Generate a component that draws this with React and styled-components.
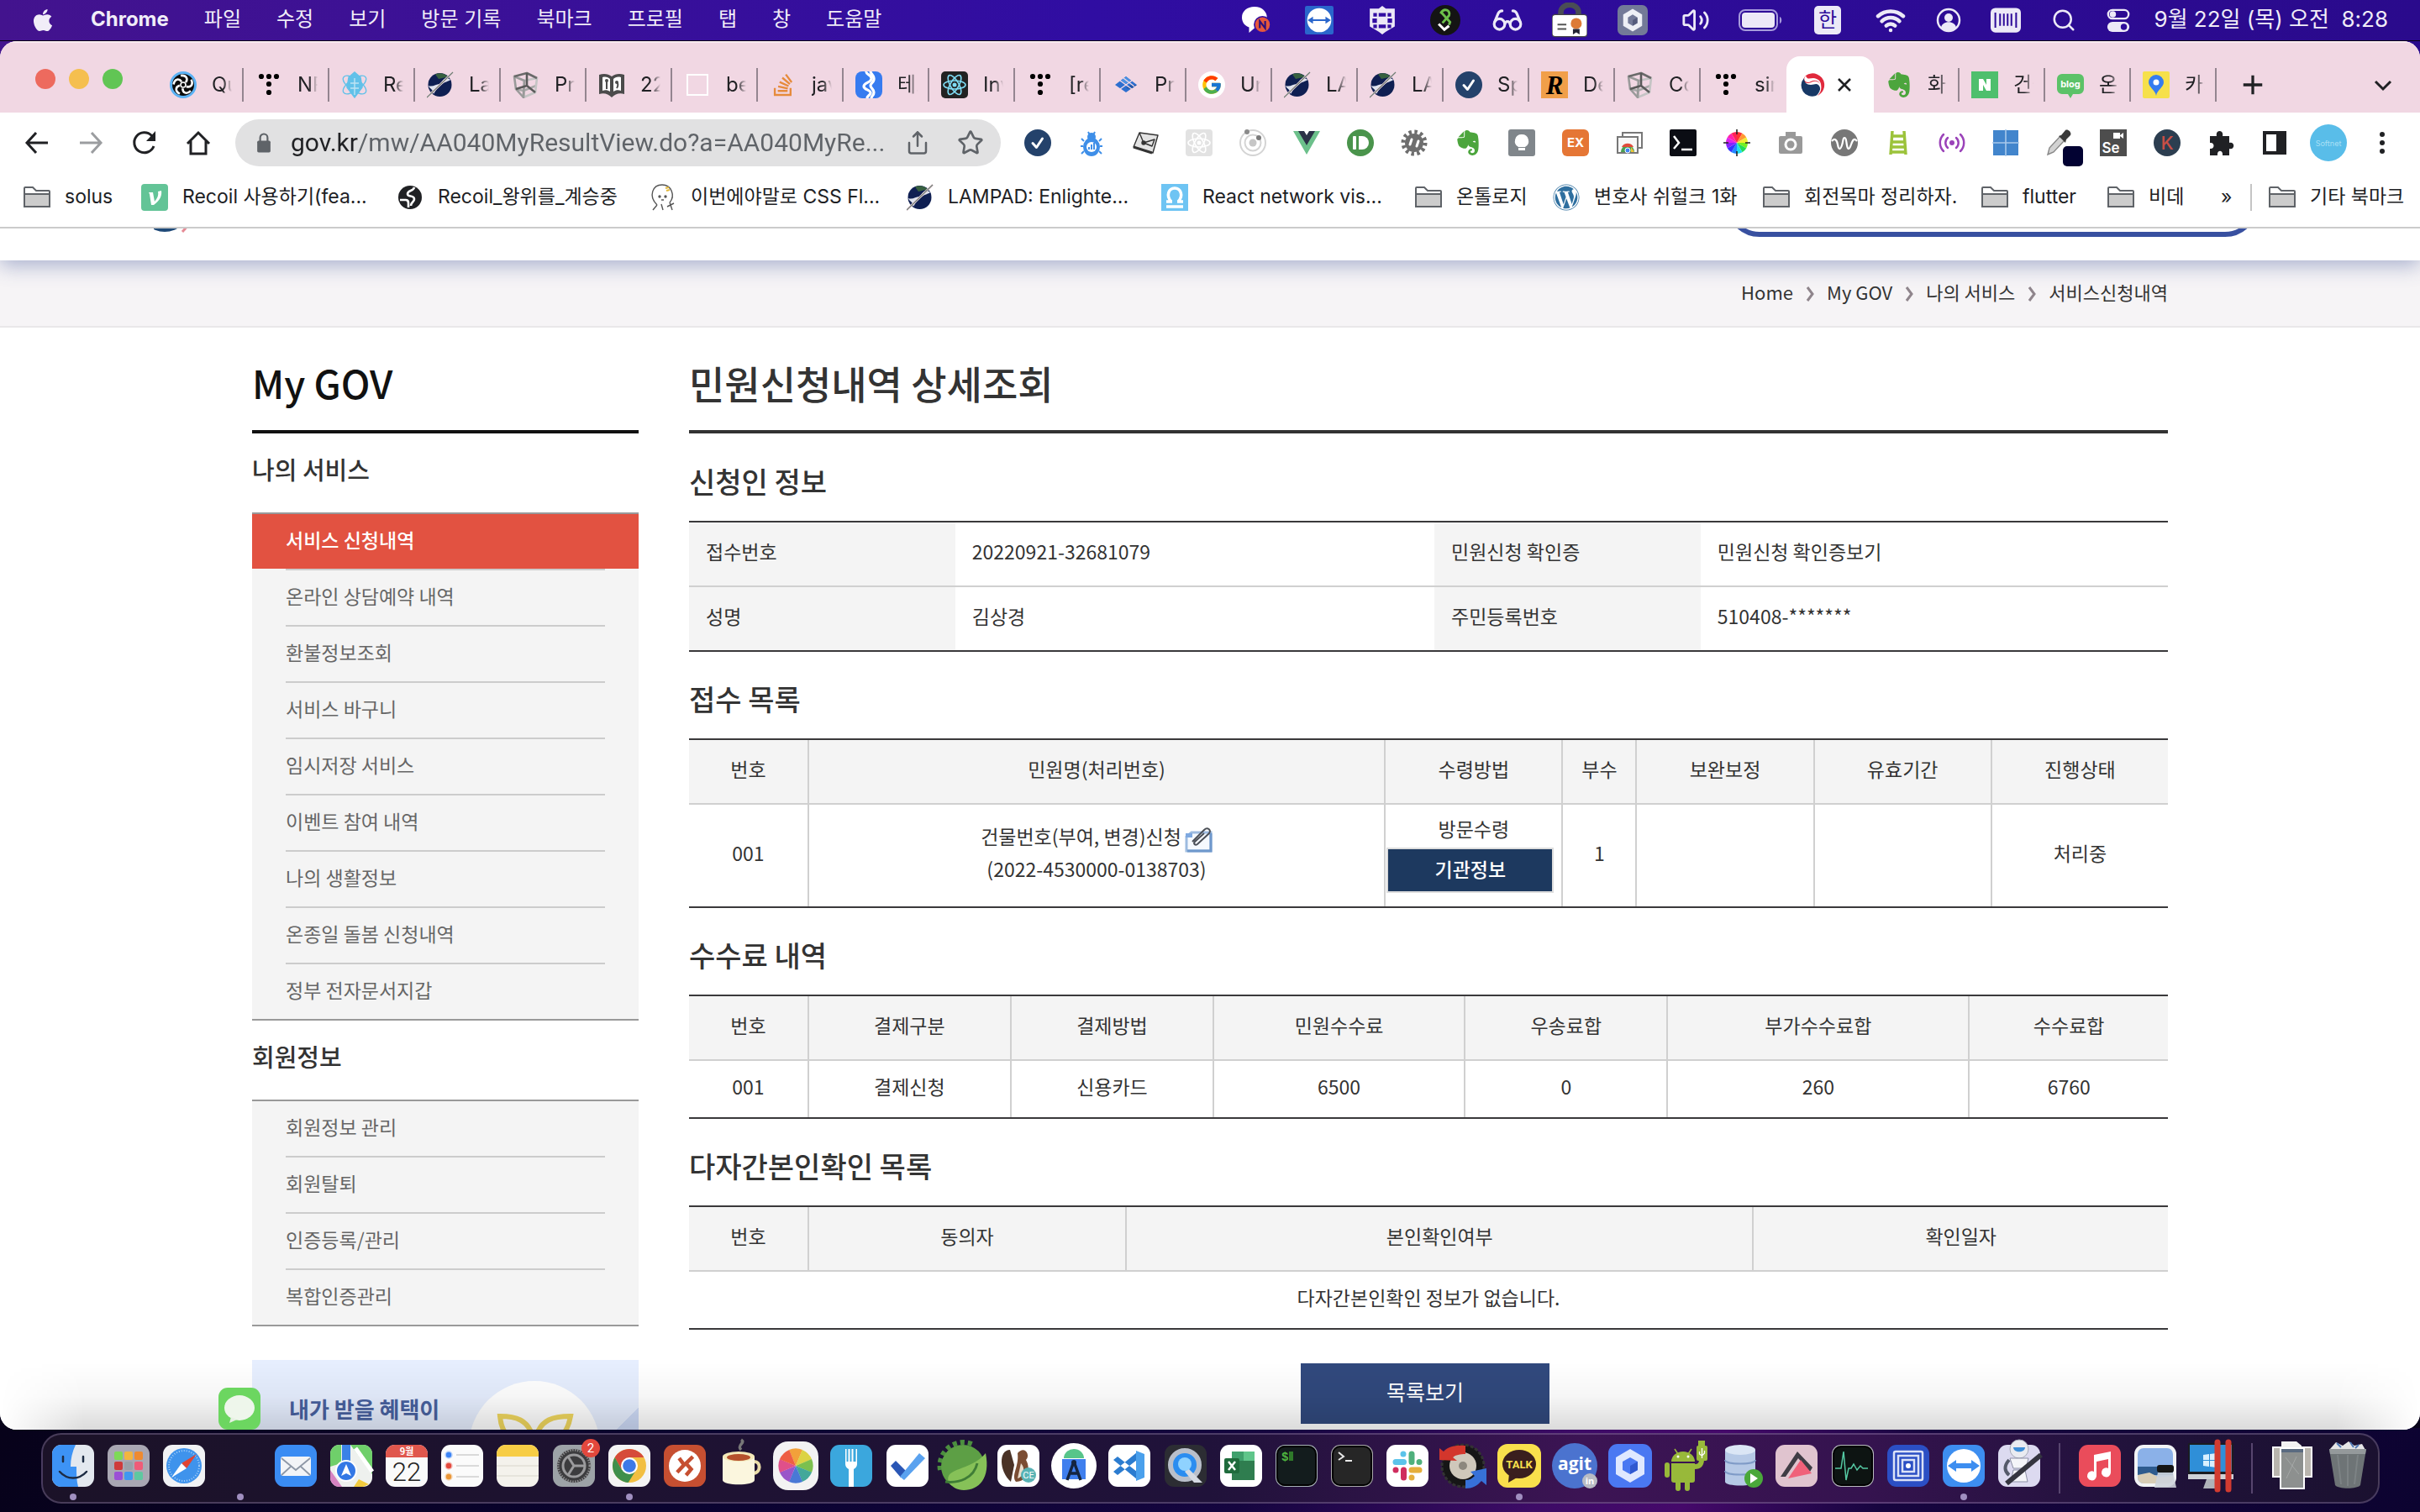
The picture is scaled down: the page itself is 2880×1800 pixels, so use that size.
import React from "react";
import styled, { createGlobalStyle, css } from "styled-components";
import { FaApple, FaEvernote, FaWordpress, FaStackOverflow } from "react-icons/fa";
import { FcGoogle } from "react-icons/fc";
import { Wifi, Search, Share, Star, Glasses, Volume2 } from "lucide-react";

const uiFont = `Inter, "Noto Sans CJK KR", sans-serif`;
const pageFont = `"Noto Sans CJK KR", "Noto Sans", sans-serif`;

const GlobalStyle = createGlobalStyle`
  *, *::before, *::after { box-sizing: border-box; }
  html, body { margin: 0; padding: 0; }
  body { overflow: hidden; background: #08031a; font-family: ${uiFont}; color: #202124; }
  button, input { font: inherit; color: inherit; }
  button { border: 0; padding: 0; background: none; cursor: pointer; }
  a { color: inherit; text-decoration: none; }
  ul, ol { margin: 0; padding: 0; list-style: none; }
  h1, h2, h3, p { margin: 0; }
`;

/* ---------- drawings: small icons on a 32 unit grid ---------- */

const Glyph = ({ children, box = 32 }) => (
  <svg viewBox={`0 0 ${box} ${box}`} width="100%" height="100%" fill="none" aria-hidden="true">
    {children}
  </svg>
);

const lampad = (
  <>
    <circle cx="15.5" cy="16" r="14" fill="#0f1f52" />
    <path d="M10 3.500a14 14 0 0 1 15 3L14 9z" fill="#37603f" />
    <path d="M2 17c5 2 9-2 13-2l-7 12c0-6-5-6-6-10z" fill="#dfe3ee" />
    <path d="M18 12c3-5 8-4 10-2-2 2-7 2-12 7z" fill="#dfe3ee" />
    <path d="M0 31L31 1" stroke="#f1d6e2" strokeWidth="2.600" />
    <path d="M0 31L31 1" stroke="#6d7d72" strokeWidth="1.200" />
  </>
);
const tistory = (
  <g fill="#000">
    {[[7, 6], [16, 6], [25, 6], [16, 15], [16, 25]].map(([x, y]) => (
      <circle key={`${x}-${y}`} cx={x} cy={y} r="3.100" />
    ))}
  </g>
);
const cube = (
  <g strokeWidth="2.600" strokeLinejoin="round">
    <path d="M13 23L28 17M13 23V31M13 23L4 21" stroke="#a9a9a9" />
    <path d="M13 31l14-6 2-17-15 3z" stroke="#c4c4c4" />
    <path d="M13 31L4 21 2 6l12 5z" stroke="#9a9a9a" />
    <path d="M2 6l15-4 12 6" stroke="#6a6a6a" />
    <path d="M17 2v15L4 21M17 17l10 8" stroke="#5a5a5a" />
  </g>
);
const checkDot = (
  <>
    <circle cx="16" cy="16" r="16" fill="#24426b" />
    <path d="M10 16.500l4.500 5L21.500 11" stroke="#fff" strokeWidth="3" strokeLinecap="round" strokeLinejoin="round" />
  </>
);
const folder = (
  <>
    <path d="M1 27V5a1 1 0 0 1 1-1h9l4 4h15a1 1 0 0 1 1 1v18z" fill="#fff" stroke="#5f6368" strokeWidth="2" />
    <path d="M1 12h30v15H1z" fill="#ccc" stroke="#5f6368" strokeWidth="2" />
  </>
);
const evernote = <FaEvernote size={34} color="#4ca53d" />;

const small = {
  lampad, tistory, cube, checkDot, folder,
  swirl: (
    <>
      <circle cx="16" cy="16" r="14.500" fill="#0b0b0b" stroke="#5bb2f4" strokeWidth="3" />
      {[0, 72, 144, 216, 288].map((a) => (
        <path key={a} transform={`rotate(${a} 16 16)`} d="M13 5c7-1 9 4 6 8" stroke="#fff" strokeWidth="2.600" />
      ))}
      <circle cx="16" cy="16" r="3" stroke="#fff" strokeWidth="1.600" />
    </>
  ),
  relay: (
    <g stroke="#62c1e9" strokeWidth="1.400">
      <ellipse cx="16" cy="16" rx="16" ry="7" transform="rotate(35 16 16)" />
      <ellipse cx="16" cy="16" rx="16" ry="7" transform="rotate(-35 16 16)" />
      <path d="M9 7l7-6 7 6 2 12-9 12-9-12z" fill="#62c1e9" />
      <path d="M16 8v20M11 14h10M11 20h10" stroke="#bfe4f4" />
    </g>
  ),
  book: (
    <>
      <path d="M1 4c6-2 11-1 15 2 4-3 9-4 15-2v23c-6-2-11 0-15 4-4-4-9-6-15-4z" fill="#4b4b4b" />
      <path d="M5 7c4-1 7 0 9 2v15c-3-2-6-2-9-1zM27 7c-4-1-7 0-9 2v15c3-2 6-2 9-1z" fill="#fff" />
      <path d="M10 11v10M22 20c2-3 2-5 0-8" stroke="#4b4b4b" strokeWidth="2" />
      <circle cx="10" cy="11" r="2" fill="#4b4b4b" /><circle cx="22" cy="13" r="2" fill="#4b4b4b" />
    </>
  ),
  blank: <rect x="4" y="4" width="24" height="24" stroke="#fff" strokeWidth="2" />,
  wave: (
    <>
      <rect width="32" height="32" rx="8" fill="#367bf0" />
      <path d="M13 0c-1 4 7 4 6 9-1 5-9 4-9 9 0 4 9 4 8 8-1 3-4 3-4 6" stroke="#fff" strokeWidth="3.200" />
      <path d="M18 0c0 3 5 5 4 10-1 4-4 4-4 7s4 4 4 8-3 4-3 7" stroke="#fff" strokeWidth="3.200" />
    </>
  ),
  reactDark: (
    <>
      <rect width="32" height="32" rx="5" fill="#222" />
      <g stroke="#7fdcf5" strokeWidth="1.600">
        <ellipse cx="16" cy="16" rx="13" ry="5" />
        <ellipse cx="16" cy="16" rx="13" ry="5" transform="rotate(60 16 16)" />
        <ellipse cx="16" cy="16" rx="13" ry="5" transform="rotate(120 16 16)" />
      </g>
      <circle cx="16" cy="16" r="2.500" fill="#7fdcf5" />
    </>
  ),
  reactLight: (
    <>
      <rect width="32" height="32" rx="4" fill="#e2e2e2" />
      <g stroke="#fff" strokeWidth="1.600">
        <ellipse cx="16" cy="16" rx="13" ry="5" />
        <ellipse cx="16" cy="16" rx="13" ry="5" transform="rotate(60 16 16)" />
        <ellipse cx="16" cy="16" rx="13" ry="5" transform="rotate(120 16 16)" />
      </g>
      <circle cx="16" cy="16" r="2.500" fill="#fff" />
    </>
  ),
  diamonds: (
    <>
      <path d="M16 6l13 10-13 9L3 16z" fill="#2d6fcf" />
      <path d="M16 6l6 5-6 4-6-4z" fill="#4a90e2" /><path d="M22 16l7 0-7 5-6-1z" fill="#1f56a8" />
      <path d="M9 11l14 10M23 11L9 21M13 8l13 10" stroke="#f1d7e3" strokeWidth="1.400" />
    </>
  ),
  rust: (
    <>
      <rect width="32" height="32" fill="#f19f4a" />
      <text x="16" y="27" textAnchor="middle" fontFamily="Liberation Serif" fontWeight="700" fontStyle="italic" fontSize="31" fill="#000">R</text>
    </>
  ),
  korea: (
    <>
      <path d="M7 5A14 14 0 0 1 29 14c1 7-3 12-8 15 6-6 6-15-1-17-5-1-6 2-10 2-6 0-7-5-3-9z" fill="#e0293c" />
      <path d="M5 8c0 5 3 8 8 8 4 0 6-2 9 0 4 4 2 10-3 13A13 13 0 0 1 5 8z" fill="#173865" />
      <path d="M7 5c-5 6 2 10 6 7 4-2 9-2 11 3 2 6-2 11-4 14 6-5 8-17 0-20-6-3-11 3-13-4z" fill="#fff" />
    </>
  ),
  naver: (
    <>
      <rect width="32" height="32" fill="#4fbf6d" />
      <path d="M9 23V9h5l4 7V9h5v14h-5l-4-7v7z" fill="#fff" />
    </>
  ),
  blog: (
    <>
      <path d="M6 3h20a6 6 0 0 1 6 6v12a6 6 0 0 1-6 6h-7l-3 5-3-5H6a6 6 0 0 1-6-6V9a6 6 0 0 1 6-6z" fill="#5cc268" />
      <text x="16" y="19" textAnchor="middle" fontFamily="Inter" fontWeight="700" fontSize="11" fill="#fff">blog</text>
    </>
  ),
  pin: (
    <>
      <rect width="32" height="32" rx="2" fill="#f6e04b" />
      <path d="M16 29c-1-7-9-10-9-16a9 9 0 0 1 18 0c0 6-8 9-9 16z" fill="#357cf0" />
      <circle cx="16" cy="13" r="3.500" fill="#fff" />
    </>
  ),
  bug: (
    <g stroke="#3f8fe8" strokeWidth="2">
      <path d="M12 3l2 4M20 3l-2 4M7 14l-3-3M25 14l3-3M6 20H3M26 20h3M7 26l-3 3M25 26l3 3" />
      <circle cx="16" cy="9" r="4" fill="#3f8fe8" />
      <ellipse cx="16" cy="21" rx="9" ry="10" fill="#3f8fe8" />
      <circle cx="16" cy="21" r="6" fill="#fff" stroke="none" /><path d="M13 24v-3M16 24v-6M19 24v-8" />
    </g>
  ),
  sheet: (
    <g stroke="#333" strokeWidth="1.400" strokeLinejoin="round">
      <path d="M9 4l22 3-6 21-23-7z" fill="#e3e3e3" /><path d="M9 4l5 12 13-4-3 8-10-4" fill="none" />
      <path d="M2 21l22 7" strokeWidth="3" /><circle cx="14" cy="16" r="2" fill="#333" />
    </g>
  ),
  orbit: (
    <g stroke="#d4d4d4" strokeWidth="2">
      <circle cx="16" cy="16" r="15" /><circle cx="16" cy="16" r="9.500" />
      <circle cx="16" cy="16" r="4.500" fill="#c6c6c6" stroke="none" />
      <circle cx="9" cy="3" r="3" fill="#8a8a8a" stroke="none" /><circle cx="23" cy="10" r="3" fill="#7a7a7a" stroke="none" />
    </g>
  ),
  vue: (
    <>
      <path d="M0 2h12l4 7 4-7h12L16 30z" fill="#6cc08b" /><path d="M6 2h7l3 5 3-5h7L16 19z" fill="#2b3247" />
    </>
  ),
  pushbullet: (
    <>
      <circle cx="16" cy="16" r="16" fill="#4a944c" /><rect x="7" y="8" width="4" height="16" rx="1" fill="#fff" />
      <path d="M14 8h4a8 8 0 0 1 0 16h-4z" fill="#fff" />
    </>
  ),
  gear: (
    <g stroke="#6e6e6e">
      <circle cx="16" cy="16" r="13" strokeWidth="5" strokeDasharray="3.400 3.400" />
      <circle cx="16" cy="16" r="10" fill="#6e6e6e" strokeWidth="2" />
      <path d="M13 12l-2 6M21 14l-2 6" stroke="#fff" strokeWidth="3" strokeLinecap="round" />
    </g>
  ),
  bulb: (
    <>
      <rect width="32" height="32" rx="3" fill="#80868b" />
      <path d="M16 6a8 8 0 0 1 4 15H12a8 8 0 0 1 4-15zM12 22h8v3h-8z" fill="#fff" />
    </>
  ),
  ex: (
    <>
      <rect width="32" height="32" rx="6" fill="#e57635" />
      <text x="16" y="21" textAnchor="middle" fontFamily="Inter" fontWeight="700" fontSize="15" fill="#fff">EX</text>
    </>
  ),
  pages: (
    <g stroke="#777" strokeWidth="2">
      <path d="M8 8V4h23v18h-4" /><rect x="2" y="9" width="24" height="19" fill="#f7f7f7" />
      <path d="M6 27a8 8 0 0 1 16 0z" fill="#4aa052" stroke="none" /><path d="M7 21a8 8 0 0 1 14 0z" fill="#e04b3b" stroke="none" />
      <path d="M18 21l4 6h-4z" fill="#f3c43a" stroke="none" /><circle cx="14" cy="25" r="3" fill="#4285f4" stroke="#fff" strokeWidth="1" />
    </g>
  ),
  term: (
    <>
      <rect width="32" height="32" rx="2" fill="#0b0d14" /><path d="M5 8l6 8-6 7M14 24h13" stroke="#fff" strokeWidth="2.500" />
    </>
  ),
  wheel: (
    <>
      {["#f33", "#f93", "#ee3", "#7e2", "#2d5", "#2de", "#28f", "#33f", "#82f", "#d2e", "#f2a", "#f25"].map((c, i) => (
        <path key={c} transform={`rotate(${i * 30} 16 16)`} d="M16 16V3a13 13 0 0 1 6.500 1.740z" fill={c} />
      ))}
      <path d="M16 0v6M16 26v6M0 16h6M26 16h6" stroke="#222" strokeWidth="1.600" />
    </>
  ),
  camera: (
    <>
      <rect x="10" y="3" width="12" height="6" fill="#999" /><rect x="2" y="8" width="28" height="21" rx="2" fill="#999" />
      <circle cx="16" cy="18" r="7.500" fill="#fff" /><circle cx="16" cy="18" r="4.500" fill="#999" />
    </>
  ),
  wcircle: (
    <>
      <circle cx="16" cy="16" r="16" fill="#777" />
      <path d="M1 14c3-4 6-2 7 4s3 7 5 1 1-9 3-9 2 3 3 9 3 5 5-1 4-8 7-4" stroke="#fff" strokeWidth="2.200" />
    </>
  ),
  ladder: <path d="M9 2l-2 28M23 2l2 28M8 8h16M8 15h16M7 21h18M7 27h18" stroke="#9cc33b" strokeWidth="3.500" />,
  signal: (
    <g stroke="#9b43b9" strokeWidth="2.500" strokeLinecap="round">
      <circle cx="16" cy="16" r="3" fill="#9b43b9" stroke="none" />
      <path d="M11 10a8 8 0 0 0 0 12M21 10a8 8 0 0 1 0 12M6 6a14 14 0 0 0 0 20M26 6a14 14 0 0 1 0 20" />
    </g>
  ),
  win: (
    <>
      <rect x="1" y="1" width="30" height="30" fill="#4285cc" /><path d="M16 0v32M0 16h32" stroke="#a8c8ea" strokeWidth="1.600" />
    </>
  ),
  dropper: (
    <>
      <path d="M2 30l2-8L17 8l5 5L9 27z" fill="#d2d2d2" stroke="#888" strokeWidth="1.400" />
      <path d="M15 8l3-1 5-6c3-2 8 3 6 6l-5 5-1 4z" fill="#3a3a3a" />
    </>
  ),
  se: (
    <>
      <rect width="32" height="32" fill="#4d4d4d" /><path d="M16 4h8v7h-8zM24 7l4-3v7l-4-3z" fill="#fff" />
      <text x="13" y="28" textAnchor="middle" fontFamily="Inter" fontWeight="600" fontSize="17" fill="#fff">Se</text>
    </>
  ),
  k: (
    <>
      <circle cx="16" cy="16" r="16" fill="#2c3e50" />
      <text x="16" y="24" textAnchor="middle" fontFamily="Inter" fontWeight="500" fontSize="22" fill="#c94f45">K</text>
    </>
  ),
  puzzle: <path d="M3 8h8c-2-8 9-8 7 0h8v8c7-2 7 9 0 7v8h-8c1-7-7-7-6 0H3v-8c6 1 6-8 0-7z" fill="#202124" />,
  panel: <path d="M2 2h28v28H2zM6 6v20h12V6z" fill="#202124" fillRule="evenodd" />,
  velog: (
    <>
      <rect width="32" height="32" rx="4" fill="#63c497" />
      <path d="M9 10h5l2 11c3-4 5-7 4-12l4-1c1 6-2 12-9 17h-3L10 12z" fill="#fff" />
    </>
  ),
  globe: (
    <>
      <circle cx="16" cy="16" r="14" fill="#202124" />
      <path d="M4 19h7c3 0 3 2 3 4v5M21 4c-1 5-8 3-8 8 0 4 8 1 8 6 0 4-4 3-4 8" stroke="#fff" strokeWidth="2.600" />
    </>
  ),
  ghost: (
    <g stroke="#555" strokeWidth="1.400">
      <path d="M9 25C-2 14 4 1 15 1s16 13 9 21M9 25l-5 6M14 24l2 7M24 22l3 9M21 27l8-4" />
      <circle cx="12" cy="15" r="1" fill="#333" /><circle cx="19" cy="15" r="1" fill="#333" /><path d="M14 19h3" />
      <path d="M19 5l4-1M20 8l4-1" stroke="#e3b93b" strokeWidth="2" />
    </g>
  ),
  omega: (
    <>
      <rect width="32" height="32" fill="#6ec4f3" />
      <path d="M12 21c-7-7-3-16 4-16s11 9 4 16M6 21h7M19 21h7M6 27h20" stroke="#fff" strokeWidth="3.500" />
    </>
  ),
  back: <path d="M29 16H4M15 4L4 16l11 12" stroke="#202124" strokeWidth="3" />,
  forward: <path d="M3 16h25M17 4l11 12-11 12" stroke="#9b9da0" strokeWidth="3" />,
  reload: (
    <>
      <path d="M27 20A12 12 0 1 1 24.500 7.500L28 11" stroke="#202124" strokeWidth="3" /><path d="M29 2v12H18z" fill="#202124" />
    </>
  ),
  home: <path d="M3 17L16 4l13 13M7 14v15h18V14" stroke="#202124" strokeWidth="3" />,
  lock: (
    <>
      <rect x="7" y="13" width="18" height="16" rx="2" fill="#5f6368" /><path d="M11 14V9a5 5 0 0 1 10 0v5" stroke="#5f6368" strokeWidth="2.500" />
    </>
  ),
  dots: (
    <g fill="#202124"><circle cx="16" cy="6" r="3" /><circle cx="16" cy="16" r="3" /><circle cx="16" cy="26" r="3" /></g>
  ),
  close: <path d="M8 8l16 16M24 8L8 24" stroke="#202124" strokeWidth="3" />,
  plus: <path d="M16 4v24M4 16h24" stroke="#202124" strokeWidth="3.500" />,
  chevDown: <path d="M7 12l9 9 9-9" stroke="#202124" strokeWidth="3" />,
  /* menu bar extras */
  chatN: (
    <>
      <path d="M14 1c9 0 14 6 14 12S23 25 14 25l-6 5v-6C2 22 0 17 0 13 0 6 6 1 14 1z" fill="#fff" />
      <circle cx="23" cy="21" r="9" fill="#e5573c" stroke="#300da2" strokeWidth="1.500" /><path d="M20 25v-8l6 8v-8" stroke="#2a0f80" strokeWidth="2" />
    </>
  ),
  tv: (
    <>
      <rect width="32" height="32" rx="2" fill="#2a66cc" /><circle cx="16" cy="16" r="13.500" fill="#fff" />
      <path d="M3 16l6-4v3h14v-3l6 4-6 4v-3H9v3z" fill="#2a66cc" />
    </>
  ),
  shield: (
    <>
      <path d="M2 3h10l4-3 4 3h10v20l-10 6-4 3-4-3-10-6z" fill="#ece9f7" />
      <path d="M6 8h4v4H6zM12 8h8v4h-8zM22 8h4v4h-4zM5 14h5v5H5zM22 14h5v5h-5zM6 21h4v4H6zM12 21h8v4h-8zM22 21h4v4h-4z" fill="#320ea2" />
    </>
  ),
  snake: (
    <>
      <circle cx="16" cy="16" r="16" fill="#141414" />
      <path d="M11 9c4-7 11-3 9 2L13 19" stroke="#6cc04a" strokeWidth="2.600" /><path d="M12 8l9 10-1 3" stroke="#6cc04a" strokeWidth="2.600" />
      <path d="M9 20l6 6 5-4" stroke="#fff" strokeWidth="2.800" />
    </>
  ),
  idlock: (
    <>
      <path d="M8 12V9a8 7 0 0 1 16 0v3" stroke="#4a4d55" strokeWidth="5" />
      <rect x="0" y="11" width="32" height="20" rx="3" fill="#fff" stroke="#444" strokeWidth="1" />
      <path d="M5 20h8M5 24h8" stroke="#555" strokeWidth="1.500" /><circle cx="22" cy="19" r="5" fill="#dd7b38" /><path d="M19 24h6v5l-3-2-3 2z" fill="#223" />
    </>
  ),
  cubeApp: (
    <>
      <rect width="32" height="32" rx="6" fill="#737a98" /><path d="M16 4l10 6v12l-10 6-10-6V10z" fill="#eef0f6" />
      <path d="M16 10l5 3v6l-5 3-5-3v-6z" fill="#737a98" /><path d="M16 16l5-3v6l-5 3z" fill="#555c7c" />
    </>
  ),
  user: (
    <>
      <circle cx="16" cy="16" r="13" stroke="#ece9f7" strokeWidth="2.500" /><circle cx="16" cy="13" r="5" fill="#ece9f7" />
      <path d="M7 25c1-9 17-9 18 0-5 5-13 5-18 0z" fill="#ece9f7" />
    </>
  ),
  bars: (
    <>
      <rect y="3" width="32" height="26" rx="5" fill="#ece9f7" />
      <path d="M5 8v16M10 9v13M14 9v13M18 9v13M22 9v13M27 8v16" stroke="#2e0c9a" strokeWidth="1.800" />
    </>
  ),
  toggles: (
    <>
      <rect x="3" y="3" width="26" height="11" rx="5.500" stroke="#ece9f7" strokeWidth="2.500" /><circle cx="9" cy="8.500" r="4" fill="#ece9f7" />
      <rect x="2" y="18" width="28" height="13" rx="6.500" fill="#ece9f7" /><circle cx="23" cy="24.500" r="4" fill="#2e0c9a" />
    </>
  ),
};

const Icon = ({ name, size = 32 }) => (
  <IconBox $size={size}>
    {name === "evernote" ? evernote
      : name === "google" ? <GoogleDisc><FcGoogle size={26} /></GoogleDisc>
      : name === "stack" ? <FaStackOverflow size={30} color="#e68b3c" />
      : name === "wordpress" ? <FaWordpress size={32} color="#2f6f9f" />
      : <Glyph>{small[name]}</Glyph>}
  </IconBox>
);
const IconBox = styled.span`
  display: inline-flex; align-items: center; justify-content: center; flex: none;
  width: ${(p) => p.$size}px; height: ${(p) => p.$size}px;
`;
const GoogleDisc = styled.span`
  display: flex; align-items: center; justify-content: center;
  width: 32px; height: 32px; border-radius: 50%; background: #fff;
`;

/* ---------- desktop and menu bar ---------- */

const Desktop = styled.div`
  display: flex; flex-direction: column; height: 100vh; overflow: hidden;
  background:
    linear-gradient(120deg, #07021a 0%, #0a0330 30%, #15053f 52%, #3d0b66 64%, #45096a 70%, #17053f 78%, #0c0330 100%) bottom / 100% 100px no-repeat,
    linear-gradient(90deg, #43138e, #300da2 45%, #2a0a8c) top / 100% 80px no-repeat,
    #08031a;
`;
const MenuBar = styled.header`
  display: flex; align-items: center; justify-content: space-between;
  height: 49px; flex: none; padding: 0 38px 0 36px; color: #f1edf8;
  border-bottom: 1px solid #0a0414; font-size: 24px;
`;
const MenuGroup = styled.nav`
  display: flex; align-items: center; gap: 42px; white-space: nowrap;
  svg { display: block; }
`;
const MenuItem = styled.button`
  line-height: 32px; padding-bottom: 2px; font-weight: ${(p) => (p.$strong ? 700 : 400)};
`;
const StatusGroup = styled.div`
  display: flex; align-items: center; white-space: nowrap;
`;
const StatusSlot = styled.span`
  display: flex; justify-content: center; align-items: center; width: ${(p) => p.$w}px;
  svg { display: block; }
`;
const InputSource = styled.button`
  width: 32px; height: 34px; border-radius: 5px; background: #ece9f7; color: #2e0c9a; line-height: 32px; text-align: center;
`;
const Clock = styled.time`
  width: 290px; padding-bottom: 2px; text-align: right; white-space: pre; font-size: 26px; line-height: 32px;
`;
const Battery = () => (
  <svg width="52" height="26" viewBox="0 0 52 26" fill="none" aria-hidden="true">
    <rect x="1" y="1" width="45" height="24" rx="7" stroke="#a79bdc" strokeWidth="2" />
    <rect x="4" y="4" width="39" height="18" rx="4" fill="#ece9f7" /><path d="M49 9c3 1 3 7 0 8z" fill="#a79bdc" />
  </svg>
);

/* ---------- browser window ---------- */

const Window = styled.main`
  position: relative; flex: 1; min-height: 0; display: flex; flex-direction: column;
  border-radius: 20px; overflow: hidden; background: #fff;
`;
const TabStrip = styled.div`
  display: flex; align-items: center; height: 85px; flex: none; background: #f1d7e3;
  padding: 16px 28px 0 42px; border-top: 2px solid #f8e9f0;
`;
const Lights = styled.div`
  display: flex; gap: 16px; width: 146px; flex: none; margin-bottom: 14px;
`;
const Light = styled.button`
  width: 24px; height: 24px; border-radius: 50%; background: ${(p) => p.$color};
`;
const Tab = styled.button`
  display: flex; align-items: center; gap: 18px; width: 102px; height: 68px; flex: none; padding-left: 14px;
  background: linear-gradient(#948590, #948590) right 14px / 2px 40px no-repeat;
  ${(p) => p.$last && css`background: none;`}
  ${(p) => p.$active && css`
    gap: 7px; background: #fff; border-radius: 16px 16px 0 0; padding-left: 16px; width: 104px;
    box-shadow: -8px 34px 0 -18px #fff, 8px 34px 0 -18px #fff;
  `}
`;
const TabLabel = styled.span`
  width: 24px; overflow: hidden; white-space: nowrap; font-size: 24px; line-height: 32px; text-align: left;
  mask-image: linear-gradient(90deg, #000 55%, transparent 100%);
`;
const StripButton = styled.button`
  display: flex; margin-left: ${(p) => (p.$push ? "auto" : "28px")};
`;
const Toolbar = styled.div`
  display: flex; align-items: center; height: 72px; flex: none; padding: 0 29px 0 28px; gap: 32px;
`;
const NavButton = styled.button` display: flex; `;
const Omnibox = styled.label`
  display: flex; align-items: center; flex: 1; min-width: 0; height: 56px; gap: 18px; margin-left: -4px; margin-right: -4px;
  padding: 0 20px; border-radius: 28px; background: #e1e1e2;
`;
const Address = styled.input`
  flex: 1; min-width: 0; border: 0; outline: 0; padding: 0; font-family: Roboto, ${uiFont}; font-size: 30px; line-height: 40px;
  background: linear-gradient(90deg, #202124 81px, #5f6368 81px) text; -webkit-text-fill-color: transparent;
`;
const Tools = styled.div`
  display: flex; gap: 32px; align-items: center; color: #5f6368;
`;
const DropperChip = styled.span`
  position: relative; display: flex;
  &::after { content: ""; position: absolute; left: 20px; top: 20px; width: 24px; height: 24px; border-radius: 5px; background: #020232; }
`;
const Avatar = styled.button`
  display: grid; place-items: center; width: 44px; height: 44px; margin: 0 -6px; border-radius: 50%;
  background: #59bde9; color: #a9e0f6; font-size: 9px;
`;
const Bookmarks = styled.nav`
  display: flex; align-items: center; height: 66px; flex: none; padding: 0 0 6px 28px; border-bottom: 2px solid #cbcbcb;
  font-size: 23px; font-weight: 400; white-space: nowrap;
`;
const Bookmark = styled.a`
  display: flex; align-items: center; gap: 17px; width: ${(p) => p.$w}px; flex: none; line-height: 32px;
`;
const BookmarkName = styled.span` padding-bottom: 2px; `;
const BookmarkRule = styled.span` flex: none; width: 2px; height: 32px; background: #c4c4c4; margin-right: 20px; `;

/* ---------- government site ---------- */

const Viewport = styled.div`
  position: relative; flex: 1; min-height: 0; overflow: hidden; font-family: ${pageFont}; color: #333; font-size: 23px; background: #fff;
`;
const SiteHeader = styled.div`
  position: relative; z-index: 1; height: 38px; background: #fff; box-shadow: 0 6px 24px rgba(60, 80, 150, .42);
`;
const HeaderClip = styled.div`
  display: flex; justify-content: space-between; align-items: flex-end; height: 38px; overflow: hidden;
  width: calc(100% - 366px); margin: 0 auto; padding: 0 9px 28px 0;
`;
const SearchPill = styled.div`
  width: 634px; height: 80px; border: 6px solid #3850a0; border-radius: 40px; background: #fff; flex: none;
`;
const Crumbs = styled.nav`
  height: 80px; background: #f6f4f6; border-bottom: 2px solid #e9e7e9;
`;
const Inner = styled.div`
  width: 79.167%; margin: 0 auto;
`;
const CrumbList = styled.ol`
  display: flex; justify-content: flex-end; align-items: center; gap: 15px; height: 73px; font-size: 22px;
  li { display: flex; align-items: center; gap: 15px; }
  svg { margin-top: 7px; }
`;
const Columns = styled(Inner)`
  display: grid; grid-template-columns: 460px minmax(0, 1fr); gap: 60px;
`;
const Title = styled.h1`
  height: 126px; padding: 35px 0 27px; border-bottom: 4px solid ${(p) => p.$line}; color: ${(p) => p.$line};
  font-size: 46px; line-height: 60px; font-weight: 500;
`;
const SideTitle = styled.h2`
  height: 94px; padding-top: 20px; font-size: 29px; line-height: 44px; font-weight: 500;
`;
const SideList = styled.ul`
  border-top: 2px solid #999; border-bottom: 2px solid #999; background: #f4f4f4;
`;
const SideItem = styled.li`
  a {
    display: block; margin: 0 40px; line-height: 61px; padding-bottom: 4px; color: #666; border-bottom: 2px solid #ccc;
  }
  &:last-child a { border-bottom: 0; }
  ${(p) => p.$active && css`
    background: linear-gradient(#e25241, #e25241) top / 100% 65px no-repeat;
    a { color: #fff; font-weight: 500; }
  `}
`;
const Banner = styled.a`
  display: flex; justify-content: space-between; margin-top: 40px; height: 140px; padding: 39px 46px 0 44px; overflow: hidden;
  background: linear-gradient(135deg, #e6eefe 86%, #cddaf6 86%);
  color: #48619f; font-size: 26px; line-height: 38px; font-weight: 700;
  svg { margin-top: -14px; flex: none; }
`;
const SectionTitle = styled.h2`
  height: 103px; padding: 31px 0 22px; font-size: 34px; line-height: 50px; font-weight: 500;
`;
const FirstSection = styled.div` padding-top: 1px; `;
const Table = styled.table`
  width: 100%; table-layout: fixed; border-collapse: separate; border-spacing: 0;
  border-top: 2px solid #3a393b; border-bottom: 2px solid #3a393b; line-height: 38px;
  th, td { height: 67px; padding: 0 20px 8px; font-weight: 400; text-align: left; }
  th { background: #f4f4f4; height: 75px; }
`;
const InfoTable = styled(Table)`
  td { height: 75px; }
  tr:first-child > * { height: 77px; border-bottom: 2px solid #d0d0d0; }
`;
const ListTable = styled(Table)`
  th, td { text-align: center; padding-left: 0; padding-right: 0; }
  th { height: 77px; border-bottom: 2px solid #d0d0d0; }
  th + th, td + td { border-left: 2px solid #d0d0d0; }
`;
const TallCell = styled.td`
  && { height: 121px; }
`;
const Attachment = styled.button`
  display: inline-flex; vertical-align: middle; margin-left: 4px;
`;
const AgencyButton = styled.button`
  display: block; width: calc(100% - 10px); height: 54px; margin: 4px 0 0 1px; padding-bottom: 4px; border: 2px solid #ddd; background: #1d395f; color: #fff;
  font-weight: 500; line-height: 46px;
`;
const Actions = styled.div`
  display: flex; justify-content: center; padding: 40px 8px 40px 0;
`;
const ListButton = styled.button`
  width: 296px; height: 72px; background: #31497d; color: #fff; font-size: 25px; line-height: 66px; padding-bottom: 6px;
`;
const DockShade = styled.div`
  position: absolute; inset: auto 0 0 0; height: 80px; pointer-events: none; z-index: 2;
  background: linear-gradient(transparent, rgba(0, 0, 0, .035) 50%, rgba(0, 0, 0, .14));
  mask-image: linear-gradient(90deg, transparent, #000 100px, #000 calc(100% - 100px), transparent);
`;
const Bounce = styled.div`
  position: absolute; left: 260px; bottom: 0; width: 50px; height: 50px; z-index: 3;
`;

/* ---------- dock ---------- */

const DockArea = styled.footer` flex: none; padding: 4px 48px 10px 49px; `;
const DockBar = styled.ul`
  display: flex; height: 84px; padding: 0 3px; border: 2px solid rgba(190, 170, 220, .28); border-radius: 24px;
  background: linear-gradient(90deg, #1b1228, #20123a 50%, #3c1454 66%, #35134f 78%, #20123a 90%, #1b1130);
`;
const DockItem = styled.li`
  flex: 1; min-width: 0; display: flex; flex-direction: column; align-items: center; padding-top: 12px;
  button { display: block; width: 50px; height: 50px; }
  svg { display: block; overflow: visible; }
  ${(p) => p.$running && css`
    &::after { content: ""; width: 8px; height: 8px; margin-top: 8px; border-radius: 50%; background: #a08fc0; }
  `}
`;
const DockRule = styled.li` width: 2px; height: 60px; margin: 10px 14px 0; background: #57456e; `;

const tile = (fill, kids, rx = 11) => (<><rect width="50" height="50" rx={rx} fill={fill} />{kids}</>);

const dockArt = {
  Finder: tile("#e3e8ef", <>
    <path d="M11 0h17c-4 8-6 17-6 26h7c0 9 0 17 2 24H11A11 11 0 0 1 0 39V11A11 11 0 0 1 11 0z" fill="#3d93f5" />
    <path d="M13 14v6M37 14v6M9 32c9 10 23 10 32 0" stroke="#1d2c44" strokeWidth="2.500" strokeLinecap="round" /></>),
  Launchpad: tile("#a9a7b3", ["#7ed957", "#f3b53f", "#ef8a30", "#cf3a3a", "#9aa0a8", "#ef5b78", "#9b4fd6", "#3f98f0", "#5ec8a0"].map((c, i) => (
    <rect key={c} x={8 + (i % 3) * 12} y={8 + Math.floor(i / 3) * 12} width="10" height="10" rx="2" fill={c} />))),
  Safari: tile("#f1f2f4", <><circle cx="25" cy="25" r="21" fill="#3f93ec" /><circle cx="25" cy="25" r="18" stroke="#a9d0f7" strokeWidth="2" strokeDasharray="1 2" />
    <path d="M40 11L28 28l-6-6z" fill="#e04433" /><path d="M10 39l12-17 6 6z" fill="#fff" /></>),
  Mail: tile("#3a8cf3", <><rect x="7" y="14" width="36" height="23" rx="3" fill="#f2f4f7" /><path d="M8 16l17 14 17-14M8 36l12-11M42 36L30 25" stroke="#8d97a6" strokeWidth="1.800" /></>),
  Maps: tile("#eef1ee", <><path d="M24 0h15a11 11 0 0 1 11 11v24z" fill="#6fcf6a" /><path d="M0 11A11 11 0 0 1 11 0h2v22L0 26z" fill="#6fcf6a" /><path d="M0 30l14 20h-3A11 11 0 0 1 0 39z" fill="#d683c2" />
    <path d="M14 0h10v24H14z" fill="#3b82e6" /><path d="M28 50l6-9 12 6-7 3z" fill="#f2cb3f" /><path d="M30 4l20 28" stroke="#fff" strokeWidth="5" />
    <circle cx="19" cy="31" r="12" fill="#3478e5" stroke="#fff" strokeWidth="2" /><path d="M19 23l6 14-6-3-6 3z" fill="#fff" /></>),
  Calendar: tile("#fafafa", <><path d="M0 15v-4A11 11 0 0 1 11 0h28a11 11 0 0 1 11 11v4z" fill="#e0574d" />
    <text x="25" y="12" textAnchor="middle" fontFamily="Noto Sans CJK KR" fontWeight="700" fontSize="11" fill="#fff">9월</text>
    <text x="25" y="43" textAnchor="middle" fontFamily="Roboto" fontWeight="300" fontSize="31" fill="#222">22</text></>),
  Reminders: tile("#fbfbfb", <>{[["#3d84f5", 12], ["#e4493c", 25], ["#eb9738", 38]].map(([c, y]) => (
    <g key={c}><circle cx="9" cy={y} r="3.200" fill={c} stroke={c} strokeOpacity=".35" strokeWidth="3" /><path d={`M18 ${y}h27`} stroke="#cfcfcf" strokeWidth="1.500" /></g>))}</>),
  Notes: tile("#f4f2ec", <><path d="M0 14v-3A11 11 0 0 1 11 0h28a11 11 0 0 1 11 11v3z" fill="#f7cd45" /><path d="M0 25h50M0 37h50" stroke="#d9d6cc" /></>),
  Settings: tile("#9da3a7", <><circle cx="25" cy="25" r="20" fill="#3c3c3e" /><circle cx="25" cy="25" r="19" stroke="#8c8c8e" strokeWidth="3" strokeDasharray="1.500 1.500" />
    <circle cx="25" cy="25" r="13" stroke="#9b9b9d" strokeWidth="3" /><path d="M25 25h13M25 25l-7-11M25 25l-7 11" stroke="#9b9b9d" strokeWidth="3" />
    <circle cx="45" cy="4" r="11" fill="#e2483d" /><text x="45" y="9" textAnchor="middle" fontFamily="Roboto" fontSize="15" fill="#fff">2</text></>),
  Chrome: tile("#f4f4f4", <><circle cx="25" cy="25" r="20" fill="#f2bf42" />
    <path d="M25 15h17.300a20 20 0 0 0-34.600 0L16 30z" fill="#d64b3a" />
    <path d="M7.700 15a20 20 0 0 0 16 30L33 30l-17 0z" fill="#3f8f4c" /><circle cx="25" cy="25" r="10" fill="#fff" /><circle cx="25" cy="25" r="7.800" fill="#3d79e8" /></>),
  Remote: tile("#c64f31", <><circle cx="25" cy="25" r="19" fill="#fff" /><path d="M17 17l7 7-7 10M33 13l-7 9 7 6-5 8" transform="rotate(8 25 25)" stroke="#c64f31" strokeWidth="4.500" /></>),
  Coffee: (<><path d="M26-6c6 4-6 6 0 12" stroke="#777" strokeWidth="3.500" /><path d="M41 20c9-1 9 14-1 14" stroke="#e9dca8" strokeWidth="4" /><path d="M4 14h38v28c0 7-38 7-38 0z" fill="#fbf6de" /><ellipse cx="23" cy="14" rx="19" ry="6" fill="#f3e8b8" /><ellipse cx="23" cy="15" rx="14" ry="4" fill="#b5502c" /></>),
  Photos: (<><rect x="-2" y="-4" width="54" height="58" rx="18" fill="#f3f3f3" />{["#f2a13a", "#dcd344", "#7cc04e", "#43a89a", "#4979d6", "#9a56c9", "#e0508a", "#ee5f44"].map((c, i) => (
    <path key={c} d="M25 25L17 6a21 21 0 0 1 16 0z" fill={c} transform={`rotate(${i * 45} 25 25)`} />))}</>),
  Fork: tile("#3ba7dd", <path d="M18 5v18c0 3 2 5 4 6v21h6V29c2-1 4-3 4-6V5h-1.500v15h-3V5h-2v15h-2V5h-2v15h-2V5z" fill="#fff" />),
  Todo: tile("#fff", <><path d="M5 25l6-6 12 12-6 8z" fill="#2a56b5" /><path d="M16 38L39 10l7 6-25 26z" fill="#5aa2ef" /></>),
  Spring: (<><path d="M-2 30A28 28 0 0 1 38 0" stroke="#4c8f3f" strokeWidth="6" strokeDasharray="5 4" /><circle cx="25" cy="26" r="26" fill="#5d9f45" /><circle cx="27" cy="27" r="27" fill="#86c158" clipPath="circle(0)" /><path d="M52 10c6 30-8 44-26 44-8 0-14-4-18-9C2 26 34 32 52 10z" fill="#86c158" /><path d="M4 44c16 2 34-4 38-22" stroke="#3f7d36" strokeWidth="3" /></>),
  DBeaver: tile("#fff", <><path d="M15 6C1 6 2 32 16 44l4-20z" fill="#4a3226" /><path d="M24 10c8-10 16 2 10 8 6 10 2 26-12 26-6-8 4-18 2-34z" fill="#7b4d33" /><path d="M28 22c6 6 3 16-4 18z" fill="#e9dccb" />
    <circle cx="37" cy="36" r="9" fill="#58b3b5" /><text x="37" y="40" textAnchor="middle" fontFamily="Roboto" fontSize="11" fill="#fff">CE</text></>),
  Studio: (<><circle cx="25" cy="25" r="27" fill="#fff" /><path d="M13 16a12 11 0 0 1 24 0z" fill="#57c58a" /><path d="M11 17h28v24H11z" fill="#3f7fee" /><path d="M25 20l-8 22M25 20l8 22M20 34h10" stroke="#152540" strokeWidth="3.500" /><circle cx="25" cy="21" r="3" fill="#152540" /></>),
  VSCode: tile("#fff", <><path d="M6 18L34 41V32L11 14zM6 32L34 9v9L11 36z" fill="#2b7cd0" /><path d="M33 7l10 4v28l-10 4z" fill="#4aa0ec" /></>),
  QuickTime: tile("#2c2d33", <><circle cx="24" cy="24" r="17" stroke="#b9bfca" strokeWidth="6" fill="#2b8df0" /><path d="M28 28l17 17h-10l-11-13z" fill="#d5dae2" /><circle cx="24" cy="23" r="8" fill="#8fd2ff" /></>),
  Excel: tile("#fff", <><path d="M14 8h27v34H14z" fill="#2f7d4f" /><path d="M28 8h13v11H28z" fill="#5fc58a" /><path d="M14 8h14v11H14z" fill="#3fa06c" /><rect x="5" y="16" width="18" height="18" rx="2" fill="#1f6b3c" /><path d="M10 20l8 10M18 20l-8 10" stroke="#fff" strokeWidth="2.500" /></>),
  iTerm: tile("#a8b4b8", <><rect x="2" y="2" width="46" height="46" rx="9" fill="#131c1d" stroke="#000" strokeWidth="2" /><text x="7" y="19" fontFamily="Liberation Mono" fontSize="14" fontWeight="700" fill="#4fb640">$</text><path d="M16 8h5v11h-5z" fill="#2f7a2a" /></>),
  Terminal: tile("#a9a9ab", <><rect x="2" y="2" width="46" height="46" rx="9" fill="#262626" stroke="#000" strokeWidth="2" /><path d="M9 9l6 5-6 4M17 19h8" stroke="#e8e8e8" strokeWidth="2" /></>),
  Slack: tile("#fff", <g strokeWidth="7" strokeLinecap="round"><path d="M20 11v0M11 20.500h9.500" stroke="#5bc3ea" /><path d="M30 11v9.500M39 20.500h0" stroke="#4fb07c" /><path d="M39 30H30M30 39h0" stroke="#e5ae3c" /><path d="M20.500 39v-9M11 30h0" stroke="#cf2c5e" /></g>),
  Sync: (<><circle cx="25" cy="25" r="25" fill="#161616" stroke="#333" strokeWidth="3" strokeDasharray="4 2" /><circle cx="25" cy="25" r="16" fill="#cfc8bb" /><circle cx="25" cy="25" r="5" fill="#8d887e" /><path d="M-3 18V4l5 4c5-6 15-8 26-7v10c-6 0-12 1-15 4l5 4z" fill="#d3362c" /><path d="M53 28v20l-6-5c-5 6-11 9-19 9V42c5 0 8-2 11-5l-5-5z" fill="#3771d8" /></>),
  Talk: (<><rect x="-1" y="-1" width="52" height="52" rx="12" fill="#f9e04c" /><ellipse cx="25" cy="23" rx="20" ry="17" fill="#3a1f1e" /><path d="M13 34l-1 11 12-7z" fill="#3a1f1e" /><text x="25" y="28" textAnchor="middle" fontFamily="Roboto" fontWeight="700" fontSize="13" fill="#f9e04c">TALK</text></>),
  Agit: (<><circle cx="25" cy="25" r="27" fill="#4b73cf" /><text x="25" y="30" textAnchor="middle" fontFamily="Open Sans" fontWeight="700" fontSize="21" fill="#fff">agit</text><circle cx="43" cy="43" r="9" fill="#b9bcc4" /><text x="43" y="47" textAnchor="middle" fontFamily="Open Sans" fontWeight="700" fontSize="11" fill="#fff">in</text></>),
  Hex: (<><rect x="-1" y="-1" width="52" height="52" rx="11" fill="#4a78f2" /><path d="M25 5l17 10v20L25 45 8 35V15z" fill="#dfe8ff" /><path d="M25 15l9 5v10l-9 5-9-5V20z" fill="#4a78f2" /><path d="M25 25l9-5v10l-9 5z" fill="#2f58d0" /></>),
  Android: (
    <g fill="#98b93a">
      <path d="M8 20a14 12 0 0 1 28 0z" /><path d="M12 5l4 6M32 5l-4 6" stroke="#98b93a" strokeWidth="1.600" />
      <circle cx="16" cy="14" r="1.500" fill="#fff" /><circle cx="28" cy="14" r="1.500" fill="#fff" />
      <path d="M8 22h28v20a3 3 0 0 1-3 3H11a3 3 0 0 1-3-3z" /><rect x="0" y="21" width="6" height="18" rx="3" />
      <rect x="13" y="40" width="6" height="15" rx="3" /><rect x="24" y="40" width="6" height="15" rx="3" />
      <path d="M36 26c6 0 8-3 8-9" stroke="#98b93a" strokeWidth="6" fill="none" />
      <rect x="38" y="1" width="13" height="18" rx="2" /><rect x="40" y="-5" width="8" height="7" />
      <path d="M44.500 4v12M41.500 8v3l3 2 3-3V7" stroke="#fff" strokeWidth="1.300" fill="none" />
    </g>
  ),
  Database: (<><path d="M6 6v38c0 6 36 6 36 0V6z" fill="#b6c9e6" /><ellipse cx="24" cy="6" rx="18" ry="6" fill="#dbe6f5" /><path d="M6 18c0 6 36 6 36 0M6 31c0 6 36 6 36 0" stroke="#7f9bc7" strokeWidth="2" /><circle cx="40" cy="40" r="11" fill="#4aa83a" /><path d="M36 34l9 6-9 6z" fill="#fff" /></>),
  Arc: tile("#e0c4cf", <><path d="M26 8l-20 30h6L27 16l14 16 3-5z" fill="#3f3d45" /><path d="M30 18l13 16-28 6z" fill="#f0617a" /></>),
  Monitor: tile("#b9bcc0", <><rect x="2" y="2" width="46" height="46" rx="9" fill="#0d1412" stroke="#000" strokeWidth="2" /><path d="M4 28h7l3-20 3 34 3-14h3l3-5 4 7 4-5 3 3h6" stroke="#55c9a3" strokeWidth="1.500" /></>),
  Frames: tile("#2b4fc4", <><rect x="8" y="8" width="34" height="34" rx="2" stroke="#dbe2f7" strokeWidth="2.500" /><rect x="13" y="13" width="24" height="24" stroke="#dbe2f7" strokeWidth="2.500" /><rect x="18" y="18" width="14" height="14" stroke="#dbe2f7" strokeWidth="2.500" /><circle cx="25" cy="25" r="3" fill="#fff" /></>),
  TeamViewer: tile("#3d8ef0", <><circle cx="25" cy="25" r="20" fill="#fff" /><path d="M6 25l10-7v4h18v-4l10 7-10 7v-4H16v4z" fill="#3d8ef0" /></>),
  Automator: tile("#dcdaf0", <><circle cx="25" cy="5" r="11" fill="#e9ebf1" stroke="#a5a9b8" /><path d="M18 3h14c0 7-14 7-14 0z" fill="#3f8fd8" /><path d="M14 16h22l-3 12H18zM18 30h14l3 14H15z" fill="#f4f5f9" stroke="#8b8fa5" /><path d="M13 18c-7 8-5 14 0 18" stroke="#555a6a" strokeWidth="4" /><path d="M10 46L51 12" stroke="#34353f" strokeWidth="6" /></>),
  Music: tile("#ea4c5b", <path d="M18 12l20-4v25a5.500 5.500 0 1 1-3-5V17l-14 3v17a5.500 5.500 0 1 1-3-5z" fill="#fff" />),
  Preview: tile("#f2f4f6", <><rect x="4" y="4" width="42" height="42" rx="7" fill="#8bb1e8" /><path d="M4 26h42v10H4z" fill="#2e5b8e" /><path d="M4 36l14-3 12 6 16-2v2a7 7 0 0 1-7 7H11a7 7 0 0 1-7-7z" fill="#d8cdb6" /><rect x="27" y="24" width="20" height="9" rx="3" fill="#151515" /><path d="M28 33h18l4 18H24z" fill="#cdd3da" fillOpacity=".9" /></>),
  Parallels: (<><rect x="-3" y="-2" width="54" height="37" fill="#1a1c20" /><rect x="-1" y="0" width="50" height="32" fill="#2f8fd8" /><path d="M15 12l7-1v7h-7zM23 11l8-1v8h-8zM15 19h7v7l-7-1zM23 19h8v8l-8-1z" fill="#d9f0ff" /><path d="M-3 35h54v6H-3z" fill="#cfd2d6" /><path d="M19 41h12l3 11H15z" fill="#aeb2b8" /><path d="M32-3v56M45-3v56" stroke="#d23b30" strokeWidth="7" strokeLinecap="round" /></>),
  Downloads: (<><rect x="2" y="3" width="46" height="35" fill="#b9b5ae" stroke="#fff" strokeWidth="2" /><path d="M12-4h18l6 5v12H12z" fill="#f2f2f2" /><rect x="11" y="4" width="28" height="48" fill="#8d908f" stroke="#fff" strokeWidth="2" /><path d="M12 5h26v4H12z" fill="#5a6a80" /><path d="M17 15l16 20M30 14L18 40" stroke="#a5a8a7" /></>),
  Trash: (<><path d="M4 5l7-8 8 4 7-5 7 5 9-2 4 7z" fill="#e6e6e6" /><path d="M12-2l5 5M28-3l4 6M38 0l-4 4" stroke="#4f78b5" strokeWidth="2" /><path d="M3 5h44l-7 43c-4 5-26 5-30 0z" fill="#6e7476" /><path d="M3 5h44l-1 6H4z" fill="#94999b" /><path d="M13 12l4 35M25 12v37M37 12l-4 35" stroke="#7d8385" strokeWidth="2" /></>),
  Messages: tile("#6cd660", <><ellipse cx="25" cy="24" rx="18" ry="15" fill="#eef6eb" /><path d="M15 35l-2 7 9-4z" fill="#e6f0e3" /></>),
};

/* ---------- data ---------- */

const menus = ["파일", "수정", "보기", "방문 기록", "북마크", "프로필", "탭", "창", "도움말"];
const tabs = [
  ["swirl", "Qu"], ["tistory", "NP"], ["relay", "Re"], ["lampad", "La"], ["cube", "Pr"], ["book", "22"], ["blank", "be"], ["stack", "jav"],
  ["wave", "테스"], ["reactDark", "Inv"], ["tistory", "[re"], ["diamonds", "Pr"], ["google", "Un"], ["lampad", "LA"], ["lampad", "LA"],
  ["checkDot", "Sp"], ["rust", "De"], ["cube", "Co"], ["tistory", "sim"], ["korea", null], ["evernote", "화면"], ["naver", "건물"], ["blog", "온라"], ["pin", "카카"],
];
const extensions = ["checkDot", "bug", "sheet", "reactLight", "orbit", "vue", "pushbullet", "gear", "evernote", "bulb", "ex", "pages", "term", "wheel", "camera", "wcircle", "ladder", "signal", "win", "dropper", "se", "k", "puzzle", "panel"];
const bookmarks = [
  ["folder", "solus", 140], ["velog", "Recoil 사용하기(fea...", 304], ["globe", "Recoil_왕위를_계승중", 301], ["ghost", "이번에야말로 CSS Fl...", 306],
  ["lampad", "LAMPAD: Enlighte...", 303], ["omega", "React network vis...", 302], ["folder", "온톨로지", 164], ["wordpress", "변호사 쉬헐크 1화", 250],
  ["folder", "회전목마 정리하자.", 260], ["folder", "flutter", 150], ["folder", "비데", 135],
];
const services = ["서비스 신청내역", "온라인 상담예약 내역", "환불정보조회", "서비스 바구니", "임시저장 서비스", "이벤트 참여 내역", "나의 생활정보", "온종일 돌봄 신청내역", "정부 전자문서지갑"];
const member = ["회원정보 관리", "회원탈퇴", "인증등록/관리", "복합인증관리"];
const crumbs = ["Home", "My GOV", "나의 서비스", "서비스신청내역"];
const dock = [
  ["Finder", 1], ["Launchpad"], ["Safari"], [null, 1], ["Mail"], ["Maps"], ["Calendar"], ["Reminders"], ["Notes"], ["Settings"], ["Chrome", 1], ["Remote"],
  ["Coffee"], ["Photos"], ["Fork"], ["Todo"], ["Spring"], ["DBeaver"], ["Studio"], ["VSCode"], ["QuickTime"], ["Excel"], ["iTerm"], ["Terminal"], ["Slack"],
  ["Sync"], ["Talk", 1], ["Agit"], ["Hex"], ["Android"], ["Database"], ["Arc"], ["Monitor"], ["Frames"], ["TeamViewer", 1], ["Automator"],
  "rule", ["Music"], ["Preview"], ["Parallels"], "rule", ["Downloads"], ["Trash"],
];

const Cols = ({ widths }) => (
  <colgroup>{widths.map((w, i) => <col key={i} style={{ width: `${w}%` }} />)}</colgroup>
);
const HeadRow = ({ names }) => (
  <thead><tr>{names.map((n) => <th key={n} scope="col">{n}</th>)}</tr></thead>
);

const MacMenu = () => (
  <MenuBar>
    <MenuGroup>
      <FaApple size={30} />
      <MenuItem $strong>Chrome</MenuItem>
      {menus.map((m) => <MenuItem key={m}>{m}</MenuItem>)}
    </MenuGroup>
    <StatusGroup>
      {["chatN", "tv", "shield", "snake"].map((n) => <StatusSlot key={n} $w={75}><Icon name={n} size={n === "snake" ? 36 : 34} /></StatusSlot>)}
      <StatusSlot $w={74}><Glasses size={38} color="#ece9f7" strokeWidth={2} /></StatusSlot>
      <StatusSlot $w={74}><Icon name="idlock" size={42} /></StatusSlot>
      <StatusSlot $w={75}><Icon name="cubeApp" size={36} /></StatusSlot>
      <StatusSlot $w={75}><Volume2 size={34} color="#ece9f7" /></StatusSlot>
      <StatusSlot $w={80}><Battery /></StatusSlot>
      <StatusSlot $w={80}><InputSource>한</InputSource></StatusSlot>
      <StatusSlot $w={70}><Wifi size={36} color="#ece9f7" strokeWidth={3} /></StatusSlot>
      <StatusSlot $w={67}><Icon name="user" /></StatusSlot>
      <StatusSlot $w={70}><Icon name="bars" size={36} /></StatusSlot>
      <StatusSlot $w={68}><Search size={30} color="#ece9f7" /></StatusSlot>
      <StatusSlot $w={62}><Icon name="toggles" size={30} /></StatusSlot>
      <Clock>9월 22일 (목) 오전  8:28</Clock>
    </StatusGroup>
  </MenuBar>
);

const BrowserChrome = () => (
  <>
    <TabStrip>
      <Lights>
        <Light $color="#ed6a5e" aria-label="닫기" /><Light $color="#f5bf4f" aria-label="최소화" /><Light $color="#61c554" aria-label="확대" />
      </Lights>
      {tabs.map(([icon, label], i) => (
        <Tab key={i} $active={label === null} $last={tabs[i + 1] && tabs[i + 1][1] === null}>
          <Icon name={icon} />
          {label === null ? <Icon name="close" size={28} /> : <TabLabel>{label}</TabLabel>}
        </Tab>
      ))}
      <StripButton aria-label="새 탭"><Icon name="plus" size={30} /></StripButton>
      <StripButton $push aria-label="탭 검색"><Icon name="chevDown" /></StripButton>
    </TabStrip>
    <Toolbar>
      {["back", "forward", "reload", "home"].map((n) => <NavButton key={n} aria-label={n}><Icon name={n} /></NavButton>)}
      <Omnibox>
        <Icon name="lock" size={28} />
        <Address aria-label="주소창" defaultValue="gov.kr/mw/AA040MyResultView.do?a=AA040MyRe..." />
        <Tools><Share size={30} /><Star size={32} /></Tools>
      </Omnibox>
      <Tools>
        {extensions.map((n, i) => (
          <NavButton key={i} aria-label={n}>{n === "dropper" ? <DropperChip><Icon name={n} /></DropperChip> : <Icon name={n} />}</NavButton>
        ))}
        <Avatar>Softnet</Avatar>
        <NavButton aria-label="메뉴"><Icon name="dots" /></NavButton>
      </Tools>
    </Toolbar>
    <Bookmarks>
      {bookmarks.map(([icon, label, w]) => (
        <Bookmark key={label} href="#" $w={w}><Icon name={icon} /><BookmarkName>{label}</BookmarkName></Bookmark>
      ))}
      <Bookmark href="#" $w={35}><BookmarkName>»</BookmarkName></Bookmark>
      <BookmarkRule />
      <Bookmark href="#" $w={170}><Icon name="folder" /><BookmarkName>기타 북마크</BookmarkName></Bookmark>
    </Bookmarks>
  </>
);

const Sidebar = () => (
  <aside>
    <Title as="h2" $line="#111">My GOV</Title>
    <SideTitle>나의 서비스</SideTitle>
    <SideList>{services.map((s, i) => <SideItem key={s} $active={i === 0}><a href="#">{s}</a></SideItem>)}</SideList>
    <SideTitle>회원정보</SideTitle>
    <SideList>{member.map((s) => <SideItem key={s}><a href="#">{s}</a></SideItem>)}</SideList>
    <Banner href="#">
      <span>내가 받을 혜택이<br />궁금하다면?</span>
      <svg width="156" height="156" viewBox="0 0 156 156" fill="none" aria-hidden="true">
        <circle cx="78" cy="78" r="78" fill="#fff" />
        <path d="M76 66C70 46 56 42 37 42c2 22 14 34 38 34zM80 66c6-20 20-24 41-24-4 22-16 34-40 34z" stroke="#f0d75f" strokeWidth="6" />
        <path d="M78 62v60" stroke="#f0d75f" strokeWidth="6" />
      </svg>
    </Banner>
  </aside>
);

const Detail = () => (
  <section>
    <Title $line="#333">민원신청내역 상세조회</Title>
    <FirstSection><SectionTitle>신청인 정보</SectionTitle></FirstSection>
    <InfoTable>
      <Cols widths={[18, 32.4, 18, 31.6]} />
      <tbody>
        <tr><th scope="row">접수번호</th><td>20220921-32681079</td><th scope="row">민원신청 확인증</th><td><a href="#">민원신청 확인증보기</a></td></tr>
        <tr><th scope="row">성명</th><td>김상경</td><th scope="row">주민등록번호</th><td>510408-*******</td></tr>
      </tbody>
    </InfoTable>
    <SectionTitle>접수 목록</SectionTitle>
    <ListTable>
      <Cols widths={[8, 39, 12, 5, 12, 12, 12]} />
      <HeadRow names={["번호", "민원명(처리번호)", "수령방법", "부수", "보완보정", "유효기간", "진행상태"]} />
      <tbody>
        <tr>
          <TallCell>001</TallCell>
          <TallCell>
            건물번호(부여, 변경)신청
            <Attachment aria-label="첨부파일">
              <svg width="33" height="31" viewBox="0 0 33 31" fill="none" aria-hidden="true">
                <path d="M2 12l6-5h23v22H2z" fill="#f5f9fe" stroke="#9dbbe0" strokeWidth="3" />
                <path d="M31 8v21H3" stroke="#6f98cc" strokeWidth="3" />
                <path d="M1 8h8v5H1z" fill="#7fa9e0" />
                <path d="M9 18L23 4c4-4 9 0 6 4L15 21c-3 2-5-1-3-3l11-10" stroke="#4b4f57" strokeWidth="2" />
              </svg>
            </Attachment>
            <br />(2022-4530000-0138703)
          </TallCell>
          <TallCell>방문수령<AgencyButton>기관정보</AgencyButton></TallCell>
          <TallCell>1</TallCell><TallCell /><TallCell /><TallCell>처리중</TallCell>
        </tr>
      </tbody>
    </ListTable>
    <SectionTitle>수수료 내역</SectionTitle>
    <ListTable>
      <Cols widths={[8, 13.7, 13.7, 17, 13.7, 20.4, 13.5]} />
      <HeadRow names={["번호", "결제구분", "결제방법", "민원수수료", "우송료합", "부가수수료합", "수수료합"]} />
      <tbody><tr><td>001</td><td>결제신청</td><td>신용카드</td><td>6500</td><td>0</td><td>260</td><td>6760</td></tr></tbody>
    </ListTable>
    <SectionTitle>다자간본인확인 목록</SectionTitle>
    <ListTable>
      <Cols widths={[8, 21.5, 42.4, 28.1]} />
      <HeadRow names={["번호", "동의자", "본인확인여부", "확인일자"]} />
      <tbody><tr><td colSpan={4}>다자간본인확인 정보가 없습니다.</td></tr></tbody>
    </ListTable>
    <Actions><ListButton>목록보기</ListButton></Actions>
  </section>
);

const Dock = () => (
  <DockArea>
    <DockBar>
      {dock.map((d, i) => d === "rule" ? <DockRule key={i} /> : (
        <DockItem key={i} $running={Boolean(d[1])}>
          <button aria-label={d[0] || "메시지"}>{d[0] && <Glyph box={50}>{dockArt[d[0]]}</Glyph>}</button>
        </DockItem>
      ))}
    </DockBar>
  </DockArea>
);

export default function App() {
  return (
    <Desktop>
      <GlobalStyle />
      <MacMenu />
      <Window>
        <BrowserChrome />
        <Viewport>
          <SiteHeader>
            <HeaderClip>
              <svg width="48" height="60" viewBox="0 0 48 60" fill="none" aria-hidden="true">
                <circle cx="13" cy="24" r="30" fill="#1f4a78" /><path d="M34 54l8-9" stroke="#e58a95" strokeWidth="3" />
              </svg>
              <SearchPill />
            </HeaderClip>
          </SiteHeader>
          <Crumbs aria-label="현재 위치">
            <Inner>
              <CrumbList>
                {crumbs.map((c, i) => (
                  <li key={c}>
                    {i > 0 && <svg width="10" height="18" viewBox="0 0 10 18" fill="none" aria-hidden="true"><path d="M2 1l6 8-6 8" stroke="#8f858c" strokeWidth="3" /></svg>}
                    <a href="#">{c}</a>
                  </li>
                ))}
              </CrumbList>
            </Inner>
          </Crumbs>
          <Columns><Sidebar /><Detail /></Columns>
          <DockShade />
        </Viewport>
        <Bounce><Glyph box={50}>{dockArt.Messages}</Glyph></Bounce>
      </Window>
      <Dock />
    </Desktop>
  );
}
